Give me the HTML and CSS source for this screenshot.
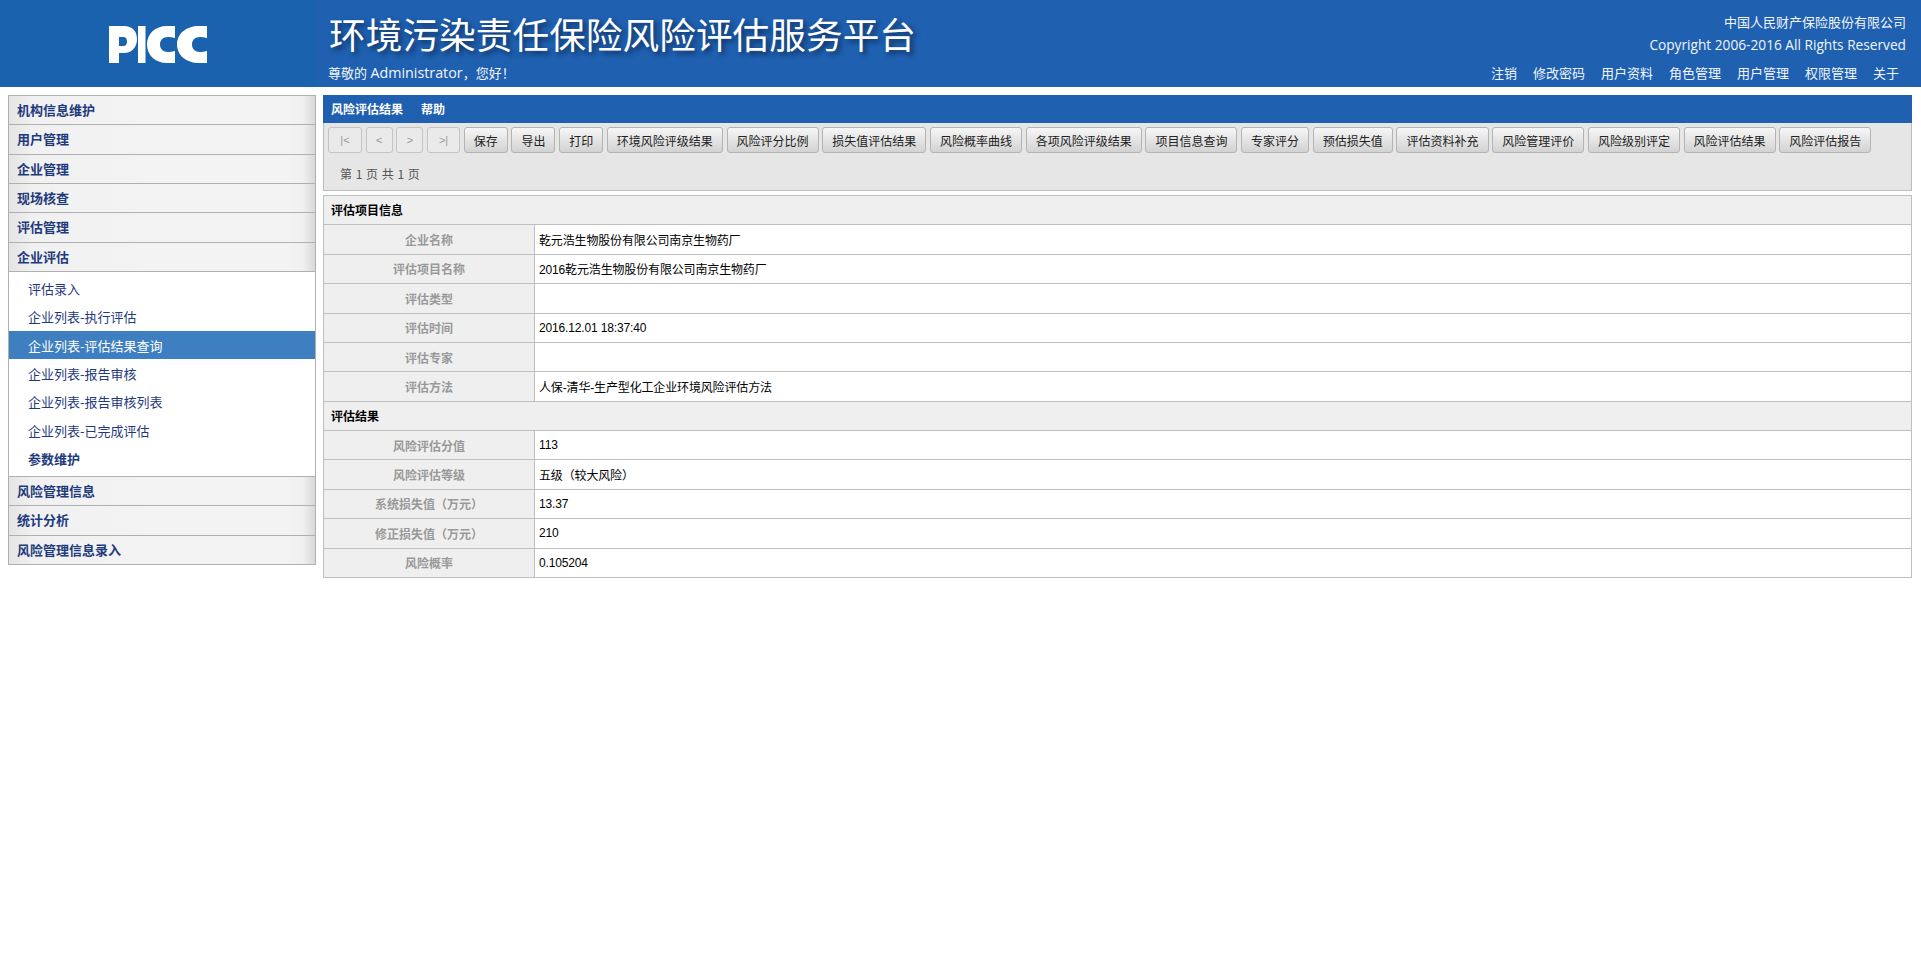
FILE: index.html
```html
<!DOCTYPE html>
<html lang="zh-CN">
<head>
<meta charset="utf-8">
<title>环境污染责任保险风险评估服务平台</title>
<link rel="stylesheet" href="styles.css">
</head>
<body>
<header class="top">
  <div class="logo-box">
    <svg class="logo" viewBox="0 0 98 37" width="98" height="37" aria-label="PICC">
      <path fill-rule="evenodd" d="M0 0H15C23 0 28 5 28 13C28 21 23 27 15 27H10V37H0ZM10 11V20H14C17 20 18 18 18 15.5C18 13 17 11 14 11Z"/>
      <path d="M29 0H36.500V37H29Z"/>
      <path d="M66 0V12C64 11.500 61 11 59 11C54 11 51 14 51 18.500C51 23 54 26 59 26C61 26 64 25.500 66 25V37H58C46 37 38 29 38 18.500C38 8 46 0 58 0Z"/>
      <path d="M98 0V12C96 11.500 93 11 91 11C86 11 83 14 83 18.500C83 23 86 26 91 26C93 26 96 25.500 98 25V37H90C77 37 68 29 68 18.500C68 8 77 0 90 0Z"/>
    </svg>
  </div>
  <div class="banner">
    <div class="banner-row">
      <h1 class="site-title">环境污染责任保险风险评估服务平台</h1>
      <div class="company">
        <div>中国人民财产保险股份有限公司</div>
        <div class="copyright">Copyright 2006-2016 All Rights Reserved</div>
      </div>
    </div>
    <div class="banner-row banner-foot">
      <div class="greeting">尊敬的 <span class="latin">Administrator</span>，您好！</div>
      <nav class="top-nav">
        <a>注销</a><a>修改密码</a><a>用户资料</a><a>角色管理</a><a>用户管理</a><a>权限管理</a><a>关于</a>
      </nav>
    </div>
  </div>
</header>
<div class="page">
  <aside class="side">
    <div class="group">机构信息维护</div>
    <div class="group">用户管理</div>
    <div class="group">企业管理</div>
    <div class="group">现场核查</div>
    <div class="group">评估管理</div>
    <div class="group">企业评估</div>
    <ul class="sub">
      <li>评估录入</li>
      <li>企业列表-执行评估</li>
      <li class="active">企业列表-评估结果查询</li>
      <li>企业列表-报告审核</li>
      <li>企业列表-报告审核列表</li>
      <li>企业列表-已完成评估</li>
      <li class="strong">参数维护</li>
    </ul>
    <div class="group">风险管理信息</div>
    <div class="group">统计分析</div>
    <div class="group last">风险管理信息录入</div>
  </aside>
  <main class="main">
    <div class="title-bar"><span>风险评估结果</span><span>帮助</span></div>
    <div class="toolbar">
      <div class="btns">
        <button class="btn pg p1">|&lt;</button>
        <button class="btn pg p2">&lt;</button>
        <button class="btn pg p3">&gt;</button>
        <button class="btn pg p4">&gt;|</button>
        <button class="btn">保存</button>
        <button class="btn">导出</button>
        <button class="btn">打印</button>
        <button class="btn">环境风险评级结果</button>
        <button class="btn">风险评分比例</button>
        <button class="btn">损失值评估结果</button>
        <button class="btn">风险概率曲线</button>
        <button class="btn">各项风险评级结果</button>
        <button class="btn">项目信息查询</button>
        <button class="btn">专家评分</button>
        <button class="btn">预估损失值</button>
        <button class="btn">评估资料补充</button>
        <button class="btn">风险管理评价</button>
        <button class="btn">风险级别评定</button>
        <button class="btn">风险评估结果</button>
        <button class="btn">风险评估报告</button>
      </div>
      <div class="pager">第 1 页 共 1 页</div>
    </div>
    <div class="info">
      <div class="section">评估项目信息</div>
      <div class="label">企业名称</div><div class="value">乾元浩生物股份有限公司南京生物药厂</div>
      <div class="label">评估项目名称</div><div class="value">2016乾元浩生物股份有限公司南京生物药厂</div>
      <div class="label">评估类型</div><div class="value"></div>
      <div class="label">评估时间</div><div class="value">2016.12.01 18:37:40</div>
      <div class="label">评估专家</div><div class="value"></div>
      <div class="label">评估方法</div><div class="value">人保-清华-生产型化工企业环境风险评估方法</div>
      <div class="section">评估结果</div>
      <div class="label">风险评估分值</div><div class="value">113</div>
      <div class="label">风险评估等级</div><div class="value">五级（较大风险）</div>
      <div class="label">系统损失值（万元）</div><div class="value">13.37</div>
      <div class="label">修正损失值（万元）</div><div class="value">210</div>
      <div class="label">风险概率</div><div class="value">0.105204</div>
    </div>
  </main>
</div>
</body>
</html>
```
FILE: styles.css
```css
* { box-sizing: border-box; }
html, body { margin: 0; padding: 0; background: #fff; }
body {
  font-family: "Liberation Sans", "Noto Sans CJK SC", sans-serif;
  font-size: 12px;
  color: #000;
}
.top { display: flex; height: 87px; background: #1f60b0; color: #fff; }
.logo-box {
  width: 316px; flex: none; display: flex; align-items: center; justify-content: center;
  background: #1a61ae;
}
.logo { fill: #fff; display: block; margin-top: 1px; }
.banner { flex: 1; display: flex; flex-direction: column; padding: 0 15px 0 12px; }
.banner-row { display: flex; justify-content: space-between; }
.site-title {
  margin: 10px 0 0 1px; font: 400 36.7px/46px "Noto Sans CJK SC", sans-serif; color: #fff;
  text-shadow: 3px 3px 5px #0f2f5c;
}
.company {
  font: 13px/21px "Open Sans", "Noto Sans CJK SC", sans-serif; text-align: right; padding-top: 12px; color: #f2f6fb;
}
.copyright { font-size: 13.7px; padding-top: 1px; }
.banner-foot { margin-top: auto; padding-bottom: 2px; align-items: center; }
.greeting, .top-nav { font: 13px/24px "Open Sans", "Noto Sans CJK SC", sans-serif; color: #f2f6fb; }
.greeting { text-spacing-trim: space-all; }
.latin { font-size: 14.3px; }
.top-nav { display: flex; gap: 16px; padding-right: 7px; }

.page { display: flex; gap: 7px; padding: 8px 9px 0 8px; align-items: flex-start; }
.side { width: 308px; flex: none; border: 1px solid #b0b0b0; border-bottom: 0; }
.group {
  height: 29.33px; padding: 0 0 1px 8px; border-bottom: 1px solid #b0b0b0;
  display: flex; align-items: center;
  font: 700 13px "Noto Sans CJK SC", sans-serif; color: #1f3a7d;
  background: linear-gradient(to right, #e4e4e4 0, #f1f1f1 8%, #f3f3f3 50%, #f3f3f3 90%, #f0f0f0 96%, #d8d8d8 100%);
}
.sub { list-style: none; margin: 0; padding: 2.2px 0 3px; border-bottom: 1px solid #b0b0b0; }
.sub li {
  height: 28.4px; padding-left: 19px; display: flex; align-items: center;
  font: 13px "Noto Sans CJK SC", sans-serif; color: #1f3a7d;
}
.sub li.active { background: #3e7fc1; color: #fff; }
.sub li.strong { font-weight: 700; }

.main { flex: 1; min-width: 0; }
.title-bar {
  height: 28px; background: #1f60b0; color: #fff; display: flex; gap: 18px; align-items: center;
  padding: 0 0 1px 8px; font: 700 12px "Noto Sans CJK SC", sans-serif;
}
.toolbar { height: 68px; background: #e6e6e6; border: 1px solid #bcbcbc; border-top: 0; padding: 4px 0 0 4px; }
.btns { display: flex; gap: 3.7px; }
.btn {
  height: 26px; padding: 0 9px; flex: none;
  border: 1px solid #b4b4b4; border-radius: 3px;
  background: linear-gradient(to bottom, #f6f6f6, #d2d2d2);
  font: 12px "Noto Sans CJK SC", sans-serif; color: #222;
}
.pg { padding: 0; color: #999; font-family: "Liberation Sans", sans-serif; font-size: 11px; background: #eaeaea; border-color: #c4c4c4; }
.p1 { width: 34px; }
.p2 { width: 27px; }
.p3 { width: 27px; }
.p4 { width: 33px; }
.pager { padding: 11px 0 0 12px; font: 12px/20px "Noto Sans CJK SC", sans-serif; color: #555; word-spacing: 1px; }

.info {
  margin-top: 4px; display: grid; grid-template-columns: 211px 1fr; grid-auto-rows: 29.385px;
  border: 1px solid #bfbfbf; border-bottom: 0;
}
.section, .label, .value { border-bottom: 1px solid #bfbfbf; display: flex; align-items: center; }
.section {
  grid-column: 1 / -1; background: #efefef; padding: 0 0 1px 7px;
  font: 700 12px "Noto Sans CJK SC", sans-serif; color: #000;
}
.label {
  justify-content: center; background: #efefef; border-right: 1px solid #bfbfbf;
  font: 700 12px "Noto Sans CJK SC", sans-serif; color: #999;
}
.value { padding-left: 4px; font-size: 12px; color: #000; letter-spacing: -0.15px; }
```
